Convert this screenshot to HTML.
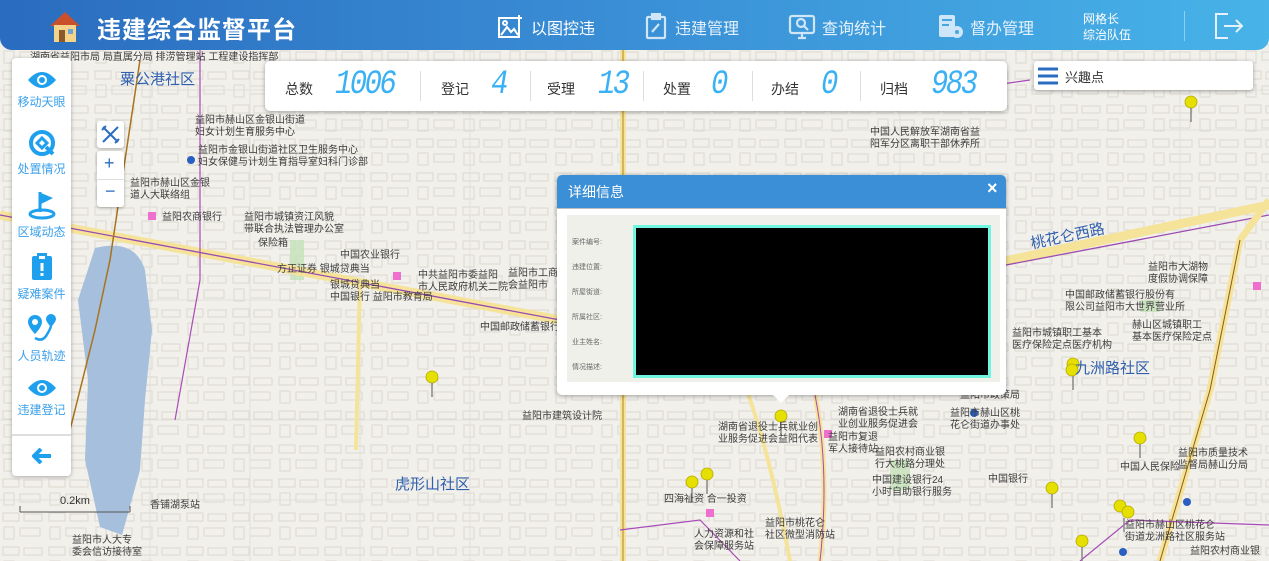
<!DOCTYPE html>
<html><head><meta charset="utf-8"><style>
*{margin:0;padding:0;box-sizing:border-box}
body{width:1269px;height:561px;overflow:hidden;position:relative;background:#f2f0eb;font-family:"Liberation Sans","Noto Sans CJK SC",sans-serif}
.abs{position:absolute}
.lbl{position:absolute;font-size:10px;color:#3c3c3c;line-height:12px;white-space:nowrap}
.big{position:absolute;font-size:15px;color:#2f5fae;white-space:nowrap}
#hdr{left:0;top:0;width:1269px;height:50px;background:linear-gradient(90deg,#2a6cbf 0%,#3a8fd6 50%,#47b3e8 100%);border-radius:0 0 12px 12px;color:#fff}
.nav{position:absolute;top:15px;font-size:16px;color:#fff}
#stats{left:265px;top:61px;width:742px;height:50px;background:#fff;border-radius:5px;box-shadow:0 1px 4px rgba(0,0,0,.35)}
.sl{position:absolute;top:18px;font-size:14px;color:#333}
.sn{position:absolute;top:5px;font-size:34px;color:#3ab0f5;font-style:italic;font-family:"Liberation Mono",monospace;letter-spacing:-3px;transform:scaleX(.85);transform-origin:left}
.sep{position:absolute;top:10px;width:1px;height:30px;background:#ddd}
#left{left:12px;top:58px;width:59px;height:418px;background:#fff;border-radius:4px;box-shadow:0 1px 4px rgba(0,0,0,.3)}
.it{position:absolute;left:0;width:59px;text-align:center;font-size:12px;color:#3aa0ea}
.it svg{display:block;margin:0 auto 3px}
.btn{position:absolute;background:#fff;border-radius:3px;box-shadow:0 1px 3px rgba(0,0,0,.3)}
</style></head><body>
<svg class="abs" style="left:0;top:0" width="1269" height="561">
<defs><pattern id="bld" width="46" height="34" patternUnits="userSpaceOnUse">
<g fill="none" stroke="#dcd9d2" stroke-width="1"><rect x="3" y="3" width="16" height="8"/><rect x="24" y="4" width="18" height="7"/><rect x="4" y="17" width="10" height="12"/><rect x="20" y="18" width="20" height="8"/></g></pattern></defs>
<rect width="1269" height="561" fill="#f2f0eb"/>
<rect width="1269" height="561" fill="url(#bld)"/>
<g fill="none" stroke="#e2e0da" stroke-width="1">
<path d="M0 90H1269M0 130H1269M0 300H1269M0 420H1269M0 500H1269M150 50V561M250 50V561M360 50V561M470 50V561M900 50V561M1050 50V561M1180 50V561"/>
</g>
<g fill="#bfe0b3" opacity=".7"><rect x="620" y="340" width="30" height="20"/><rect x="290" y="240" width="14" height="40"/><rect x="890" y="460" width="20" height="30"/><rect x="1140" y="300" width="20" height="12"/></g>
<path d="M95 248 Q135 238 145 270 L152 330 L145 400 L140 470 L122 535 L100 527 L85 460 L88 380 L78 300 Z" fill="#a5bfdd"/>
<path d="M0 215 L560 320" stroke="#f5e39a" stroke-width="9"/>
<path d="M0 215 L560 320" stroke="#9b4bb0" stroke-width="1.3"/>
<path d="M1000 262 L1269 205" stroke="#f5e39a" stroke-width="9"/>
<path d="M980 270 L1269 215" stroke="#9b4bb0" stroke-width="1.3"/>
<path d="M623 561 L623 50" stroke="#f5e39a" stroke-width="6"/><path d="M623 561 L623 50" stroke="#b0852a" stroke-width="1"/>
<path d="M1160 561 L1210 390 L1240 240 L1269 200" stroke="#f5e39a" stroke-width="7" fill="none"/>
<path d="M1160 561 L1210 390 L1240 240" stroke="#8a5b1a" stroke-width="1" fill="none"/>
<path d="M140 60 L110 260 L95 330 L70 430 L45 440" stroke="#a8731c" stroke-width="1.5" fill="none"/>
<path d="M175 420 L200 280 L200 50" stroke="#a84bb8" stroke-width="1.2" fill="none"/>
<path d="M815 395 Q830 470 820 561" stroke="#f5e39a" stroke-width="5" fill="none"/>
<path d="M815 395 Q830 470 820 561" stroke="#a84bb8" stroke-width="1" fill="none"/>
<path d="M600 180 L600 300" stroke="#f5e39a" stroke-width="5"/>
<path d="M360 280 L356 450" stroke="#f5e39a" stroke-width="4"/>
<path d="M720 330 Q760 400 790 561" stroke="#f5e39a" stroke-width="4" fill="none"/>
<path d="M620 530 L700 520 L740 561" stroke="#a84bb8" stroke-width="1.2" fill="none"/>
<path d="M1080 561 L1130 520 L1269 525" stroke="#a84bb8" stroke-width="1.2" fill="none"/>
<path d="M880 100 Q960 90 1030 80" stroke="#a84bb8" stroke-width="1.2" fill="none"/>
<path d="M20 512 H130" stroke="#555" stroke-width="1"/><path d="M20 506V512M130 506V512" stroke="#555"/>
<g fill="#e5e000" stroke="#b5a800" stroke-width=".8">
<circle cx="432" cy="377" r="6"/><circle cx="781" cy="416" r="6"/><circle cx="692" cy="482" r="6"/><circle cx="707" cy="474" r="6"/><circle cx="1191" cy="102" r="6"/><circle cx="1073" cy="364" r="6"/><circle cx="1072" cy="370" r="6"/><circle cx="1140" cy="438" r="6"/><circle cx="1052" cy="488" r="6"/><circle cx="1120" cy="506" r="6"/><circle cx="1128" cy="512" r="6"/><circle cx="1082" cy="541" r="6"/>
</g>
<g stroke="#888" stroke-width="1.5">
<path d="M432 383v14M781 422v14M692 488v14M707 480v14M1191 108v14M1073 376v14M1140 444v14M1052 494v14M1124 518v14M1082 547v14"/>
</g>
<g fill="#ef6fcf"><rect x="148" y="212" width="8" height="8"/><rect x="393" y="272" width="8" height="8"/><rect x="706" y="509" width="8" height="8"/><rect x="824" y="430" width="8" height="8"/><rect x="1253" y="282" width="8" height="8"/></g>
<g fill="#2a5ec0"><circle cx="191" cy="160" r="4"/><circle cx="1123" cy="552" r="4"/><circle cx="974" cy="413" r="4"/><circle cx="1187" cy="502" r="4"/></g>
</svg>
<div class="big" style="left:120px;top:68px">粟公港社区</div>
<div class="big" style="left:395px;top:473px">虎形山社区</div>
<div class="big" style="left:1075px;top:357px">九洲路社区</div>
<div class="big" style="left:1030px;top:225px;transform:rotate(-12deg)">桃花仑西路</div>
<div class="lbl" style="left:195px;top:115px">益阳市赫山区金银山街道<br>妇女计划生育服务中心</div>
<div class="lbl" style="left:198px;top:145px">益阳市金银山街道社区卫生服务中心<br>妇女保健与计划生育指导室妇科门诊部</div>
<div class="lbl" style="left:130px;top:178px">益阳市赫山区金银<br>道人大联络组</div>
<div class="lbl" style="left:162px;top:212px">益阳农商银行</div>
<div class="lbl" style="left:244px;top:212px">益阳市城镇资江风貌<br>带联合执法管理办公室</div>
<div class="lbl" style="left:258px;top:238px">保险箱</div>
<div class="lbl" style="left:340px;top:250px">中国农业银行</div>
<div class="lbl" style="left:277px;top:264px">方正证券 银城贷典当</div>
<div class="lbl" style="left:330px;top:280px">银城贷典当<br>中国银行 益阳市教育局</div>
<div class="lbl" style="left:418px;top:270px">中共益阳市委益阳<br>市人民政府机关二院</div>
<div class="lbl" style="left:508px;top:268px">益阳市工商<br>会益阳市</div>
<div class="lbl" style="left:480px;top:322px">中国邮政储蓄银行</div>
<div class="lbl" style="left:522px;top:411px">益阳市建筑设计院</div>
<div class="lbl" style="left:718px;top:422px">湖南省退役士兵就业创<br>业服务促进会益阳代表</div>
<div class="lbl" style="left:838px;top:407px">湖南省退役士兵就<br>业创业服务促进会</div>
<div class="lbl" style="left:828px;top:432px">益阳市复退<br>军人接待站</div>
<div class="lbl" style="left:950px;top:408px">益阳市赫山区桃<br>花仑街道办事处</div>
<div class="lbl" style="left:875px;top:447px">益阳农村商业银<br>行大桃路分理处</div>
<div class="lbl" style="left:872px;top:475px">中国建设银行24<br>小时自助银行服务</div>
<div class="lbl" style="left:988px;top:474px">中国银行</div>
<div class="lbl" style="left:664px;top:494px">四海祉资 合一投资</div>
<div class="lbl" style="left:765px;top:518px">益阳市桃花仑<br>社区微型消防站</div>
<div class="lbl" style="left:694px;top:529px">人力资源和社<br>会保障服务站</div>
<div class="lbl" style="left:1120px;top:462px">中国人民保险</div>
<div class="lbl" style="left:1178px;top:448px">益阳市质量技术<br>监督局赫山分局</div>
<div class="lbl" style="left:1125px;top:520px">益阳市赫山区桃花仑<br>街道龙洲路社区服务站</div>
<div class="lbl" style="left:1190px;top:546px">益阳农村商业银</div>
<div class="lbl" style="left:870px;top:127px">中国人民解放军湖南省益<br>阳军分区离职干部休养所</div>
<div class="lbl" style="left:1148px;top:262px">益阳市大湖物<br>度假协调保障</div>
<div class="lbl" style="left:1065px;top:290px">中国邮政储蓄银行股份有<br>限公司益阳市大世界营业所</div>
<div class="lbl" style="left:1012px;top:328px">益阳市城镇职工基本<br>医疗保险定点医疗机构</div>
<div class="lbl" style="left:1132px;top:320px">赫山区城镇职工<br>基本医疗保险定点</div>
<div class="lbl" style="left:960px;top:390px">益阳市政策局</div>
<div class="lbl" style="left:150px;top:500px">香铺湖泵站</div>
<div class="lbl" style="left:72px;top:535px">益阳市人大专<br>委会信访接待室</div>
<div class="lbl" style="left:60px;top:495px;font-size:11px;color:#333">0.2km</div>
<div class="lbl" style="left:30px;top:52px">湖南省益阳市局 局直属分局 排涝管理站 工程建设指挥部</div>

<div id="hdr" class="abs">
<svg class="abs" style="left:47px;top:9px" width="36" height="34" viewBox="0 0 36 34"><path d="M3 17 L18 3 L33 17 Z" fill="#c9502a"/><rect x="7" y="16" width="22" height="17" fill="#f3d48a"/><rect x="12" y="21" width="6" height="12" fill="#8a5a2a"/><rect x="21" y="20" width="5" height="5" fill="#6aa6d8"/></svg>
<div class="abs" style="left:97px;top:10px;font-size:24px;font-weight:bold;letter-spacing:1px">违建综合监督平台</div>
<svg class="abs" style="left:497px;top:15px" width="26" height="24" viewBox="0 0 26 24" fill="none" stroke="#fff" stroke-width="2"><rect x="2" y="3" width="20" height="19"/><path d="M4 20 L10 12 L14 17 L17 14 L21 20" /><circle cx="8" cy="8" r="2"/><path d="M22 0v6M19 3h6"/></svg>
<div class="nav" style="left:531px">以图控违</div>
<svg class="abs" style="left:645px;top:13px" width="22" height="27" viewBox="0 0 22 27" fill="none" stroke="#cfe6f8" stroke-width="2.2"><rect x="2" y="4" width="18" height="21" rx="1"/><rect x="7" y="1" width="8" height="5" fill="#cfe6f8"/><path d="M7 19 L14 11"/></svg>
<div class="nav" style="left:675px;color:#e6f2fb">违建管理</div>
<svg class="abs" style="left:788px;top:13px" width="28" height="27" viewBox="0 0 28 27" fill="none" stroke="#cfe6f8" stroke-width="2.2"><rect x="2" y="3" width="24" height="17" rx="2"/><circle cx="13" cy="10" r="4"/><path d="M16 13l4 4M10 25h8M14 20v5"/></svg>
<div class="nav" style="left:822px;color:#e6f2fb">查询统计</div>
<svg class="abs" style="left:938px;top:13px" width="26" height="27" viewBox="0 0 26 27" fill="#cfe6f8"><rect x="1" y="2" width="16" height="22" rx="2"/><rect x="4" y="6" width="10" height="2" fill="#47a6e0"/><rect x="4" y="11" width="7" height="2" fill="#47a6e0"/><circle cx="19" cy="19" r="6"/><circle cx="19" cy="19" r="2" fill="#47a6e0"/></svg>
<div class="nav" style="left:970px;color:#e6f2fb">督办管理</div>
<div class="abs" style="left:1083px;top:11px;font-size:12px;line-height:16px;color:#fff">网格长<br>综治队伍</div>
<div class="abs" style="left:1184px;top:11px;width:1px;height:30px;background:#8fd0f2"></div>
<svg class="abs" style="left:1214px;top:12px" width="30" height="28" viewBox="0 0 30 28" fill="none" stroke="#e6f2fb" stroke-width="2"><path d="M14 2H2V26H14"/><path d="M10 14H28M22 8l6 6-6 6"/></svg>
</div>

<div id="stats" class="abs">
<div class="sl" style="left:20px">总数</div><div class="sn" style="left:70px">1006</div><div class="sep" style="left:155px"></div>
<div class="sl" style="left:176px">登记</div><div class="sn" style="left:226px">4</div><div class="sep" style="left:265px"></div>
<div class="sl" style="left:282px">受理</div><div class="sn" style="left:333px">13</div><div class="sep" style="left:378px"></div>
<div class="sl" style="left:398px">处置</div><div class="sn" style="left:446px">0</div><div class="sep" style="left:487px"></div>
<div class="sl" style="left:506px">办结</div><div class="sn" style="left:556px">0</div><div class="sep" style="left:595px"></div>
<div class="sl" style="left:615px">归档</div><div class="sn" style="left:666px">983</div>
</div>
<div class="abs" style="left:1034px;top:61px;width:219px;height:29px;background:#fff;border-radius:3px;box-shadow:0 1px 4px rgba(0,0,0,.35)">
<svg class="abs" style="left:3px;top:6px" width="22" height="18"><path d="M1 2H21M1 9H21M1 16H21" stroke="#2a6cc0" stroke-width="3"/></svg>
<div class="abs" style="left:31px;top:6px;font-size:13px;color:#333">兴趣点</div></div>

<div id="left" class="abs">
<div class="it" style="top:12px"><svg width="30" height="20" viewBox="0 0 30 20"><path d="M1 10 Q15 -6 29 10 Q15 26 1 10Z" fill="#1ea0ee"/><circle cx="15" cy="10" r="5" fill="#fff"/><circle cx="15" cy="10" r="3" fill="#1ea0ee"/></svg>移动天眼</div>
<div class="it" style="top:71px"><svg width="28" height="28" viewBox="0 0 28 28"><circle cx="14" cy="14" r="11" fill="none" stroke="#1ea0ee" stroke-width="4"/><path d="M9 14l5-5 5 5-5 5z" fill="none" stroke="#1ea0ee" stroke-width="3"/><path d="M18 18l7 7" stroke="#1ea0ee" stroke-width="4"/></svg>处置情况</div>
<div class="it" style="top:132px"><svg width="30" height="30" viewBox="0 0 30 30"><path d="M13 2V22" stroke="#1ea0ee" stroke-width="3"/><path d="M14 3 L26 8 L14 14Z" fill="#1ea0ee"/><ellipse cx="15" cy="24" rx="12" ry="4" fill="none" stroke="#1ea0ee" stroke-width="3"/></svg>区域动态</div>
<div class="it" style="top:194px"><svg width="24" height="30" viewBox="0 0 24 30"><rect x="2" y="4" width="20" height="24" rx="2" fill="#1ea0ee"/><rect x="7" y="1" width="10" height="6" fill="#1ea0ee"/><rect x="9" y="4" width="6" height="3" fill="#fff"/><rect x="10.5" y="11" width="3" height="8" fill="#fff"/><rect x="10.5" y="21" width="3" height="3" fill="#fff"/></svg>疑难案件</div>
<div class="it" style="top:254px"><svg width="32" height="32" viewBox="0 0 32 32"><path d="M9 3a7 7 0 0 1 7 7c0 5-7 12-7 12S2 15 2 10a7 7 0 0 1 7-7z" fill="#1ea0ee"/><circle cx="9" cy="10" r="3" fill="#fff"/><path d="M25 2a5 5 0 0 1 5 5c0 3-5 8-5 8s-5-5-5-8a5 5 0 0 1 5-5z" fill="#1ea0ee"/><path d="M9 26 Q16 30 20 24 Q24 18 25 14" fill="none" stroke="#1ea0ee" stroke-width="2.5"/></svg>人员轨迹</div>
<div class="it" style="top:320px"><svg width="30" height="20" viewBox="0 0 30 20"><path d="M1 10 Q15 -6 29 10 Q15 26 1 10Z" fill="#1ea0ee"/><circle cx="15" cy="10" r="5" fill="#fff"/><circle cx="15" cy="10" r="3" fill="#1ea0ee"/></svg>违建登记</div>
<div class="abs" style="left:0;top:376px;width:59px;height:2px;background:#ddd"></div>
<svg class="abs" style="left:20px;top:390px" width="20" height="16" viewBox="0 0 20 16"><path d="M9 1L2 8l7 7M2 8H19" fill="none" stroke="#1ea0ee" stroke-width="4"/></svg>
</div>

<div class="btn" style="left:97px;top:121px;width:27px;height:27px"><svg style="position:absolute;left:3px;top:3px" width="21" height="21" viewBox="0 0 21 21" fill="none" stroke="#2a6cc0" stroke-width="2"><path d="M3 3l15 15M18 3L3 18M2 6l4-4M15 19l4-4"/></svg></div>
<div class="btn" style="left:97px;top:151px;width:27px;height:56px"><div class="abs" style="left:7px;top:2px;font-size:18px;color:#2a6cc0">+</div><div class="abs" style="left:0;top:28px;width:27px;height:1px;background:#ddd"></div><div class="abs" style="left:8px;top:30px;font-size:18px;color:#2a6cc0">−</div></div>

<div class="abs" style="left:557px;top:175px;width:449px;height:220px;background:#fff;border-radius:5px;box-shadow:0 1px 5px rgba(0,0,0,.35)">
<div class="abs" style="left:0;top:0;width:449px;height:34px;background:#3a8fd6;border-radius:5px 5px 0 0;border-bottom:1px solid #bbb"></div>
<div class="abs" style="left:11px;top:7px;font-size:14px;color:#fff">详细信息</div>
<div class="abs" style="left:430px;top:3px;font-size:18px;color:#fff;font-weight:bold">×</div>
<div class="abs" style="left:10px;top:40px;width:433px;height:167px;background:#f0f0eb"></div>
<div class="abs" style="left:15px;top:55px;font-size:7px;line-height:25px;color:#666">案件编号:<br>违建位置:<br>所屋街道:<br>所属社区:<br>业主姓名:<br>情况描述:</div>
<div class="abs" style="left:76px;top:50px;width:358px;height:153px;background:#000;border:3px solid #6ff5e0"></div>
<div class="abs" style="left:215px;top:219px;width:0;height:0;border-left:9px solid transparent;border-right:9px solid transparent;border-top:9px solid #fff"></div>
</div>
</body></html>
